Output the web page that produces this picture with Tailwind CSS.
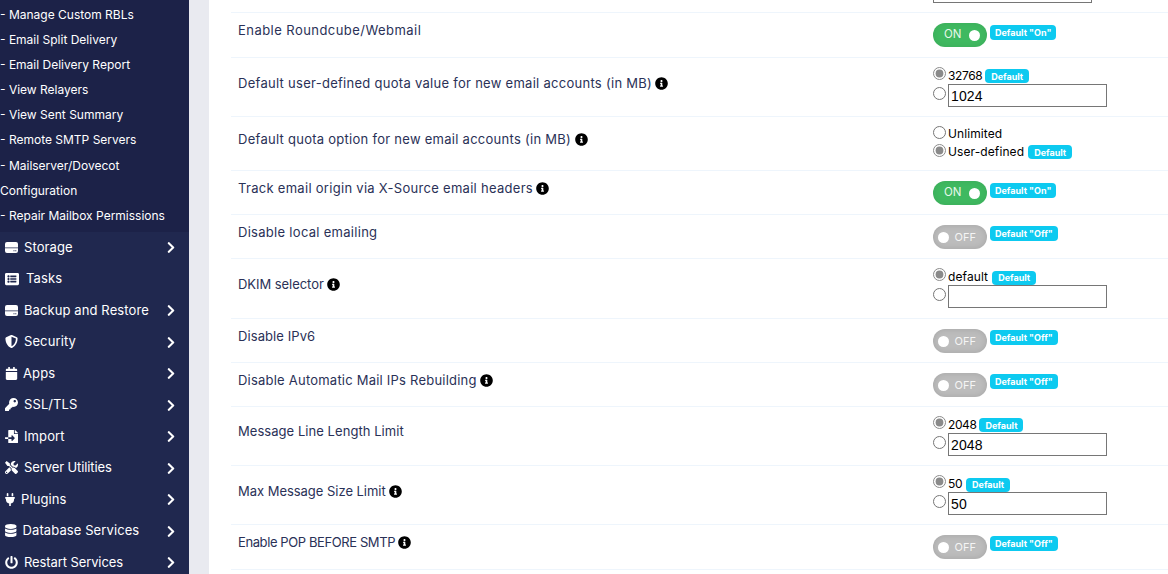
<!DOCTYPE html>
<html lang="en">
<head>
  <meta charset="UTF-8" />
  <title>Mail Settings</title>
  <script src="https://cdn.jsdelivr.net/npm/@tailwindcss/browser@4"></script>
</head>
<body class="h-[574px] overflow-hidden bg-white font-['Inter',sans-serif]">
  <svg class="hidden">
    <symbol id="chev" viewBox="0 0 320 512"><path d="M285.476 272.971L91.132 467.314c-9.373 9.373-24.569 9.373-33.941 0l-22.667-22.667c-9.357-9.357-9.375-24.522-.04-33.901L188.505 256 34.484 101.255c-9.335-9.379-9.317-24.544.04-33.901l22.667-22.667c9.373-9.373 24.569-9.373 33.941 0L285.475 239.03c9.373 9.372 9.373 24.568.001 33.941z"/></symbol>
    <symbol id="info" viewBox="0 0 512 512"><path d="M256 8C119.043 8 8 119.083 8 256c0 136.997 111.043 248 248 248s248-111.003 248-248C504 119.083 392.957 8 256 8zm0 110c23.196 0 42 18.804 42 42s-18.804 42-42 42-42-18.804-42-42 18.804-42 42-42zm56 254c0 6.627-5.373 12-12 12h-88c-6.627 0-12-5.373-12-12v-24c0-6.627 5.373-12 12-12h12v-64h-12c-6.627 0-12-5.373-12-12v-24c0-6.627 5.373-12 12-12h64c6.627 0 12 5.373 12 12v100h12c6.627 0 12 5.373 12 12v24z"/></symbol>
    <symbol id="hdd" viewBox="0 0 13 11"><path fill-rule="evenodd" d="M2 0h9a2 2 0 0 1 2 2v3.5H0V2a2 2 0 0 1 2-2zM0 6.3h13V9a2 2 0 0 1-2 2H2a2 2 0 0 1-2-2zM8.5 8.2h1v1h-1zM10.3 8.2h1v1h-1z"/></symbol>
  </svg>

  <div class="flex h-full">
    <!-- sidebar -->
    <aside class="w-[189px] shrink-0 overflow-hidden bg-[#20284f] text-white">
      <div class="h-[232px] bg-[#1c2248] pt-[2px] text-[12px] leading-[25.1px]">
        <div>- Manage Custom RBLs</div>
        <div>- Email Split Delivery</div>
        <div>- Email Delivery Report</div>
        <div>- View Relayers</div>
        <div>- View Sent Summary</div>
        <div>- Remote SMTP Servers</div>
        <div>- Mailserver/Dovecot</div>
        <div>Configuration</div>
        <div>- Repair Mailbox Permissions</div>
      </div>
      <nav class="-mt-[0.5px] text-[13px] tracking-[0.1px]">
        <a class="flex h-[31.5px] items-center pl-[5px]"><svg class="mr-[6px] h-[11px] w-[13px] fill-white"><use href="#hdd"/></svg>Storage<svg class="ml-auto mr-[14px] mt-[1px] h-[13px] w-[8px] fill-white"><use href="#chev"/></svg></a>
        <a class="flex h-[31.5px] items-center pl-[5px]"><svg class="mr-[7px] h-[14px] w-[14px] fill-white" viewBox="0 0 512 512"><path d="M464 480H48c-26.51 0-48-21.49-48-48V80c0-26.51 21.49-48 48-48h416c26.51 0 48 21.49 48 48v352c0 26.51-21.49 48-48 48zM128 120c-22.091 0-40 17.909-40 40s17.909 40 40 40 40-17.909 40-40-17.909-40-40-40zm0 96c-22.091 0-40 17.909-40 40s17.909 40 40 40 40-17.909 40-40-17.909-40-40-40zm0 96c-22.091 0-40 17.909-40 40s17.909 40 40 40 40-17.909 40-40-17.909-40-40-40zm288-136v-32c0-6.627-5.373-12-12-12H204c-6.627 0-12 5.373-12 12v32c0 6.627 5.373 12 12 12h200c6.627 0 12-5.373 12-12zm0 96v-32c0-6.627-5.373-12-12-12H204c-6.627 0-12 5.373-12 12v32c0 6.627 5.373 12 12 12h200c6.627 0 12-5.373 12-12zm0 96v-32c0-6.627-5.373-12-12-12H204c-6.627 0-12 5.373-12 12v32c0 6.627 5.373 12 12 12h200c6.627 0 12-5.373 12-12z"/></svg>Tasks</a>
        <a class="flex h-[31.5px] items-center pl-[5px]"><svg class="mr-[6px] h-[11px] w-[13px] fill-white"><use href="#hdd"/></svg>Backup and Restore<svg class="ml-auto mr-[14px] mt-[1px] h-[13px] w-[8px] fill-white"><use href="#chev"/></svg></a>
        <a class="flex h-[31.5px] items-center pl-[5px]"><svg class="mr-[6px] h-[13px] w-[13px] fill-white" viewBox="0 0 512 512"><path d="M466.5 83.7l-192-80a48.15 48.15 0 0 0-36.9 0l-192 80C27.7 91.1 16 108.6 16 128c0 198.5 114.5 335.7 221.5 380.3 11.8 4.9 25.1 4.9 36.9 0C360.1 472.6 496 349.3 496 128c0-19.4-11.7-36.9-29.5-44.3zM256.1 446.3l-.1-381 175.9 73.3c-3.3 151.4-82.1 261.1-175.8 307.7z"/></svg>Security<svg class="ml-auto mr-[14px] mt-[1px] h-[13px] w-[8px] fill-white"><use href="#chev"/></svg></a>
        <a class="flex h-[31.5px] items-center pl-[5px]"><svg class="mr-[5px] h-[13px] w-[13px] fill-white" viewBox="0 0 448 512"><path d="M12 192h424c6.6 0 12 5.4 12 12v260c0 26.5-21.5 48-48 48H48c-26.5 0-48-21.5-48-48V204c0-6.6 5.4-12 12-12zm436-44v-36c0-26.5-21.5-48-48-48h-48V12c0-6.6-5.4-12-12-12h-40c-6.6 0-12 5.4-12 12v52H160V12c0-6.6-5.4-12-12-12h-40c-6.6 0-12 5.4-12 12v52H48C21.5 64 0 85.5 0 112v36c0 6.6 5.4 12 12 12h424c6.6 0 12-5.4 12-12z"/></svg>Apps<svg class="ml-auto mr-[14px] mt-[1px] h-[13px] w-[8px] fill-white"><use href="#chev"/></svg></a>
        <a class="flex h-[31.5px] items-center pl-[5px]"><svg class="mr-[6px] h-[13px] w-[13px] fill-white" viewBox="0 0 512 512"><path d="M512 176.001C512 273.203 433.202 352 336 352c-11.22 0-22.19-1.062-32.827-3.069l-24.012 27.014A23.999 23.999 0 0 1 261.223 384H224v40c0 13.255-10.745 24-24 24h-40v40c0 13.255-10.745 24-24 24H24c-13.255 0-24-10.745-24-24v-78.059c0-6.365 2.529-12.47 7.029-16.971l161.802-161.802C163.108 213.814 160 195.271 160 176 160 78.798 238.797.001 335.999 0 433.488-.001 512 78.511 512 176.001zM336 128c0 26.51 21.49 48 48 48s48-21.49 48-48-21.49-48-48-48-48 21.49-48 48z"/></svg>SSL/TLS<svg class="ml-auto mr-[14px] mt-[1px] h-[13px] w-[8px] fill-white"><use href="#chev"/></svg></a>
        <a class="flex h-[31.5px] items-center pl-[5px]"><svg class="mr-[6px] h-[13px] w-[13px] fill-white" viewBox="0 0 512 512"><path d="M16 288c-8.8 0-16 7.2-16 16v32c0 8.8 7.2 16 16 16h112v-64zm489-183L407.1 7c-4.5-4.5-10.6-7-17-7H384v128h128v-6.1c0-6.3-2.5-12.4-7-16.9zm-153 31V0H152c-13.3 0-24 10.7-24 24v264h128v-65.2c0-14.3 17.3-21.4 27.4-11.3L379 308c6.6 6.7 6.6 17.4 0 24l-95.7 96.4c-10.1 10.1-27.4 3-27.4-11.3V352H128v136c0 13.3 10.7 24 24 24h336c13.3 0 24-10.7 24-24V160H376c-13.2 0-24-10.8-24-24z"/></svg>Import<svg class="ml-auto mr-[14px] mt-[1px] h-[13px] w-[8px] fill-white"><use href="#chev"/></svg></a>
        <a class="flex h-[31.5px] items-center pl-[5px]"><svg class="mr-[6px] h-[13px] w-[13px] fill-white" viewBox="0 0 512 512"><path d="M501.1 395.7L384 278.6c-23.1-23.1-57.6-27.6-85.4-13.9L192 158.1V96L64 0 0 64l96 128h62.1l106.6 106.6c-13.6 27.8-9.2 62.3 13.9 85.4l117.1 117.1c14.6 14.6 38.2 14.6 52.7 0l52.7-52.7c14.5-14.6 14.5-38.2 0-52.7zM331.7 225c28.3 0 54.9 11 74.9 31l19.4 19.4c15.8-6.9 30.8-16.5 43.8-29.5 37.1-37.1 49.7-89.3 37.9-136.7-2.2-9-13.5-12.1-20.1-5.5l-74.4 74.4-67.9-11.3L334 98.9l74.4-74.4c6.6-6.6 3.4-17.9-5.7-20.2-47.4-11.7-99.6.9-136.6 37.9-28.5 28.5-41.9 66.1-41.2 103.6l82.1 82.1c8.1-1.9 16.5-2.9 24.7-2.9zm-103.9 82l-56.7-56.7L18.7 402.8c-25 25-25 65.5 0 90.5s65.5 25 90.5 0l123.6-123.6c-7.6-19.9-9.9-41.6-5-62.7zM64 472c-13.2 0-24-10.8-24-24 0-13.3 10.7-24 24-24s24 10.7 24 24c0 13.2-10.7 24-24 24z"/></svg><span class="tracking-[-0.1px]">Server Utilities</span><svg class="ml-auto mr-[14px] mt-[1px] h-[13px] w-[8px] fill-white"><use href="#chev"/></svg></a>
        <a class="flex h-[31.5px] items-center pl-[5px]"><svg class="mr-[6px] h-[13px] w-[10px] fill-white" viewBox="0 0 384 512"><path d="M320,32a32,32,0,0,0-64,0v96h64Zm48,128H16A16,16,0,0,0,0,176v32a16,16,0,0,0,16,16H32v32A160.07,160.07,0,0,0,160,412.8V512h64V412.8A160.07,160.07,0,0,0,352,256V224h16a16,16,0,0,0,16-16V176A16,16,0,0,0,368,160ZM128,32a32,32,0,0,0-64,0v96h64Z"/></svg>Plugins<svg class="ml-auto mr-[14px] mt-[1px] h-[13px] w-[8px] fill-white"><use href="#chev"/></svg></a>
        <a class="flex h-[31.5px] items-center pl-[5px]"><svg class="mr-[6px] h-[13px] w-[11.5px] fill-white" viewBox="0 0 448 512"><path d="M448 73.143v45.714C448 159.143 347.667 192 224 192S0 159.143 0 118.857V73.143C0 32.857 100.333 0 224 0s224 32.857 224 73.143zM448 176v102.857C448 319.143 347.667 352 224 352S0 319.143 0 278.857V176c48.125 33.143 136.208 48.572 224 48.572S399.874 209.143 448 176zm0 160v102.857C448 479.143 347.667 512 224 512S0 479.143 0 438.857V336c48.125 33.143 136.208 48.572 224 48.572S399.874 369.143 448 336z"/></svg>Database Services<svg class="ml-auto mr-[14px] mt-[1px] h-[13px] w-[8px] fill-white"><use href="#chev"/></svg></a>
        <a class="flex h-[31.5px] items-center pl-[5px]"><svg class="mr-[6px] h-[13px] w-[13px] fill-white" viewBox="0 0 512 512"><path d="M400 54.1c63 45 104 118.6 104 201.9 0 136.8-110.8 247.7-247.5 248C120 504.3 8.2 393 8 256.4 7.9 173.1 48.9 99.3 111.8 54.2c11.7-8.3 28-4.8 35 7.7L162.6 90c5.9 10.5 3.1 23.8-6.6 31-41.5 30.8-68 79.6-68 134.9-.1 92.3 74.5 168.1 168 168.1 91.6 0 168.6-74.2 168-169.1-.3-51.8-24.7-101.8-68.1-134-9.7-7.2-12.4-20.5-6.5-30.9l15.8-28.1c7-12.4 23.2-16.1 34.8-7.8zM296 264V24c0-13.3-10.7-24-24-24h-32c-13.3 0-24 10.7-24 24v240c0 13.3 10.7 24 24 24h32c13.3 0 24-10.7 24-24z"/></svg><span class="tracking-[-0.1px]">Restart Services</span><svg class="ml-auto mr-[14px] mt-[1px] h-[13px] w-[8px] fill-white"><use href="#chev"/></svg></a>
      </nav>
    </aside>

    <div class="w-[20px] shrink-0 bg-[#e9eaf0]"></div>

    <!-- settings rows -->
    <main class="min-w-0 flex-1 pl-[22px] text-[13px] text-[#2a3157]">
      <div class="h-[13px] border-b border-[#eef5fc] pl-[702px]">
        <div class="h-[3px] w-[159px] border border-t-0 border-[#767676]"></div>
      </div>

      <div class="flex h-[45px] border-b border-[#eef5fc]">
        <div class="w-[702px] pl-[7px] pt-[8px] tracking-[0.45px]">Enable Roundcube/Webmail</div>
        <div class="flex items-start pt-[10px]">
          <span class="flex h-[24px] w-[54px] items-center justify-between rounded-full bg-[#3fb960] pl-[11px] pr-[7px] text-[11.5px] text-[#e6f7ea] shadow-[inset_0_0_6px_rgba(0,0,0,0.08)]">ON<i class="h-[11px] w-[11px] rounded-full bg-white"></i></span>
          <span class="ml-[3px] mt-[2px] rounded-[4px] bg-[#0dcaf0] px-[5px] py-[2px] text-[9px] leading-[11px] font-bold text-white">Default "On"</span>
        </div>
      </div>

      <div class="flex h-[59px] border-b border-[#eef5fc]">
        <div class="flex w-[702px] items-start pl-[7px] pt-[16px] tracking-[0.28px]">Default user-defined quota value for new email accounts (in MB)<svg class="ml-[3px] mt-[3px] h-[13px] w-[13px] fill-black"><use href="#info"/></svg></div>
        <div class="pt-[8px] text-[12px] tracking-[0.1px] text-black">
          <div class="flex h-[18px] items-center"><input type="radio" checked class="m-0 mb-[3px] mr-[2px] accent-[#8a8a8a]"><span class="mt-[1px] tracking-[-0.4px]">32768</span><span class="ml-[3px] mt-[2px] rounded-[4px] bg-[#0dcaf0] px-[6px] py-[1.5px] text-[9px] leading-[11px] font-bold tracking-normal text-white">Default</span></div>
          <div class="flex items-center"><input type="radio" class="m-0 mb-[4px] mr-[2px] accent-[#8a8a8a]"><input value="1024" class="h-[23px] w-[159px] border border-[#767676] px-[2px] font-['Liberation_Sans',sans-serif] text-[14px] text-black"></div>
        </div>
      </div>

      <div class="flex h-[54px] border-b border-[#eef5fc]">
        <div class="flex w-[702px] items-start pl-[7px] pt-[13px] tracking-[0.27px]">Default quota option for new email accounts (in MB)<svg class="ml-[4px] mt-[3px] h-[13px] w-[13px] fill-black"><use href="#info"/></svg></div>
        <div class="pt-[7px] text-[12px] tracking-[0.1px] text-black">
          <div class="flex h-[18px] items-center"><input type="radio" class="m-0 mb-[2px] mr-[2px] accent-[#8a8a8a]"><span class="mt-[1px]">Unlimited</span></div>
          <div class="flex h-[18px] items-center"><input type="radio" checked class="m-0 mb-[2px] mr-[2px] accent-[#8a8a8a]"><span class="mt-[1px]">User-defined</span><span class="ml-[4px] mt-[2px] rounded-[4px] bg-[#0dcaf0] px-[6px] py-[1.5px] text-[9px] leading-[11px] font-bold tracking-normal text-white">Default</span></div>
        </div>
      </div>

      <div class="flex h-[44px] border-b border-[#eef5fc]">
        <div class="flex w-[702px] items-start pl-[7px] pt-[8px] tracking-[0.29px]">Track email origin via X-Source email headers<svg class="ml-[3px] mt-[3px] h-[13px] w-[13px] fill-black"><use href="#info"/></svg></div>
        <div class="flex items-start pt-[10px]">
          <span class="flex h-[24px] w-[54px] items-center justify-between rounded-full bg-[#3fb960] pl-[11px] pr-[7px] text-[11.5px] text-[#e6f7ea] shadow-[inset_0_0_6px_rgba(0,0,0,0.08)]">ON<i class="h-[11px] w-[11px] rounded-full bg-white"></i></span>
          <span class="ml-[3px] mt-[2px] rounded-[4px] bg-[#0dcaf0] px-[5px] py-[2px] text-[9px] leading-[11px] font-bold text-white">Default "On"</span>
        </div>
      </div>

      <div class="flex h-[44px] border-b border-[#eef5fc]">
        <div class="w-[702px] pl-[7px] pt-[8px] tracking-[0.29px]">Disable local emailing</div>
        <div class="flex items-start pt-[10px]">
          <span class="flex h-[24px] w-[54px] items-center justify-between rounded-full bg-[#bcbcbc] pl-[5px] pr-[11px] text-[11px] text-[#f5f5f5] shadow-[inset_0_0_6px_rgba(0,0,0,0.12)]"><i class="h-[11px] w-[11px] rounded-full bg-white"></i>OFF</span>
          <span class="ml-[3px] mt-[1px] rounded-[4px] bg-[#0dcaf0] px-[5px] py-[2px] text-[9px] leading-[11px] font-bold text-white">Default "Off"</span>
        </div>
      </div>

      <div class="flex h-[60px] border-b border-[#eef5fc]">
        <div class="flex w-[702px] items-start pl-[7px] pt-[16px] tracking-[-0.05px]">DKIM selector<svg class="ml-[3px] mt-[3px] h-[13px] w-[13px] fill-black"><use href="#info"/></svg></div>
        <div class="pt-[8px] text-[12px] tracking-[0.1px] text-black">
          <div class="flex h-[18px] items-center"><input type="radio" checked class="m-0 mb-[3px] mr-[2px] accent-[#8a8a8a]"><span class="mt-[1px]">default</span><span class="ml-[4px] mt-[3px] rounded-[4px] bg-[#0dcaf0] px-[6px] py-[1.5px] text-[9px] leading-[11px] font-bold tracking-normal text-white">Default</span></div>
          <div class="flex items-center"><input type="radio" class="m-0 mb-[4px] mr-[2px] accent-[#8a8a8a]"><input value="" class="h-[23px] w-[159px] border border-[#767676] px-[2px] font-['Liberation_Sans',sans-serif] text-[14px] text-black"></div>
        </div>
      </div>

      <div class="flex h-[44px] border-b border-[#eef5fc]">
        <div class="w-[702px] pl-[7px] pt-[8px] tracking-[0.08px]">Disable IPv6</div>
        <div class="flex items-start pt-[10px]">
          <span class="flex h-[24px] w-[54px] items-center justify-between rounded-full bg-[#bcbcbc] pl-[5px] pr-[11px] text-[11px] text-[#f5f5f5] shadow-[inset_0_0_6px_rgba(0,0,0,0.12)]"><i class="h-[11px] w-[11px] rounded-full bg-white"></i>OFF</span>
          <span class="ml-[3px] mt-[1px] rounded-[4px] bg-[#0dcaf0] px-[5px] py-[2px] text-[9px] leading-[11px] font-bold text-white">Default "Off"</span>
        </div>
      </div>

      <div class="flex h-[44px] border-b border-[#eef5fc]">
        <div class="flex w-[702px] items-start pl-[7px] pt-[8px] tracking-[0.22px]">Disable Automatic Mail IPs Rebuilding<svg class="ml-[3px] mt-[3px] h-[13px] w-[13px] fill-black"><use href="#info"/></svg></div>
        <div class="flex items-start pt-[10px]">
          <span class="flex h-[24px] w-[54px] items-center justify-between rounded-full bg-[#bcbcbc] pl-[5px] pr-[11px] text-[11px] text-[#f5f5f5] shadow-[inset_0_0_6px_rgba(0,0,0,0.12)]"><i class="h-[11px] w-[11px] rounded-full bg-white"></i>OFF</span>
          <span class="ml-[3px] mt-[1px] rounded-[4px] bg-[#0dcaf0] px-[5px] py-[2px] text-[9px] leading-[11px] font-bold text-white">Default "Off"</span>
        </div>
      </div>

      <div class="flex h-[59px] border-b border-[#eef5fc]">
        <div class="w-[702px] pl-[7px] pt-[15px] tracking-[0.05px]">Message Line Length Limit</div>
        <div class="pt-[8px] text-[12px] tracking-[0.1px] text-black">
          <div class="flex h-[18px] items-center"><input type="radio" checked class="m-0 mb-[3px] mr-[2px] accent-[#8a8a8a]"><span class="mt-[1px] tracking-[-0.4px]">2048</span><span class="ml-[3px] mt-[2px] rounded-[4px] bg-[#0dcaf0] px-[6px] py-[1.5px] text-[9px] leading-[11px] font-bold tracking-normal text-white">Default</span></div>
          <div class="flex items-center"><input type="radio" class="m-0 mb-[4px] mr-[2px] accent-[#8a8a8a]"><input value="2048" class="h-[23px] w-[159px] border border-[#767676] px-[2px] font-['Liberation_Sans',sans-serif] text-[14px] text-black"></div>
        </div>
      </div>

      <div class="flex h-[59px] border-b border-[#eef5fc]">
        <div class="flex w-[702px] items-start pl-[7px] pt-[16px] tracking-[-0.03px]">Max Message Size Limit<svg class="ml-[3px] mt-[3px] h-[13px] w-[13px] fill-black"><use href="#info"/></svg></div>
        <div class="pt-[8px] text-[12px] tracking-[0.1px] text-black">
          <div class="flex h-[18px] items-center"><input type="radio" checked class="m-0 mb-[3px] mr-[2px] accent-[#8a8a8a]"><span class="mt-[1px] tracking-[-0.4px]">50</span><span class="ml-[4px] mt-[3px] rounded-[4px] bg-[#0dcaf0] px-[6px] py-[1.5px] text-[9px] leading-[11px] font-bold tracking-normal text-white">Default</span></div>
          <div class="flex items-center"><input type="radio" class="m-0 mb-[4px] mr-[2px] accent-[#8a8a8a]"><input value="50" class="h-[23px] w-[159px] border border-[#767676] px-[2px] font-['Liberation_Sans',sans-serif] text-[14px] text-black"></div>
        </div>
      </div>

      <div class="flex h-[45px] border-b border-[#eef5fc]">
        <div class="flex w-[702px] items-start pl-[7px] pt-[8px] tracking-[-0.4px]">Enable POP BEFORE SMTP<svg class="ml-[3px] mt-[3px] h-[13px] w-[13px] fill-black"><use href="#info"/></svg></div>
        <div class="flex items-start pt-[10px]">
          <span class="flex h-[24px] w-[54px] items-center justify-between rounded-full bg-[#bcbcbc] pl-[5px] pr-[11px] text-[11px] text-[#f5f5f5] shadow-[inset_0_0_6px_rgba(0,0,0,0.12)]"><i class="h-[11px] w-[11px] rounded-full bg-white"></i>OFF</span>
          <span class="ml-[3px] mt-[1px] rounded-[4px] bg-[#0dcaf0] px-[5px] py-[2px] text-[9px] leading-[11px] font-bold text-white">Default "Off"</span>
        </div>
      </div>
    </main>
  </div>
</body>
</html>
